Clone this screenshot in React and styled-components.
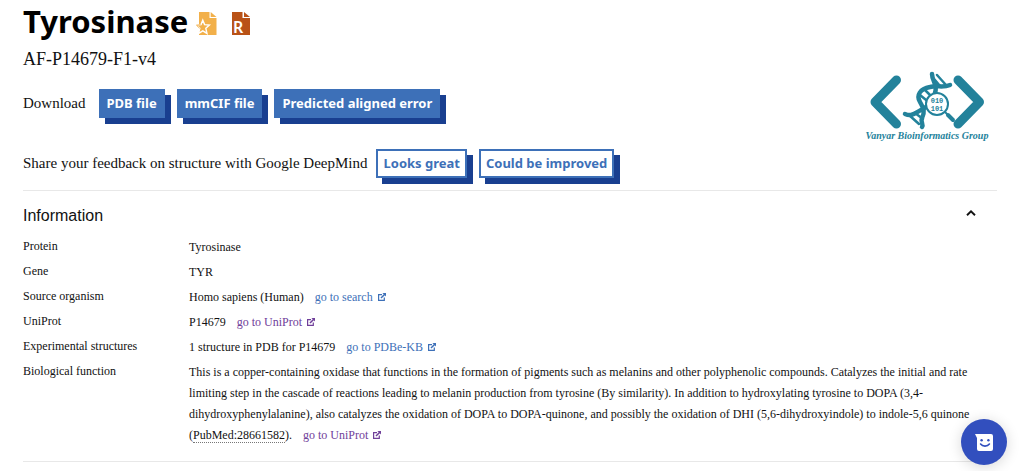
import React, { useState } from "react";
import styled, { createGlobalStyle } from "styled-components";

const App = () => {
  const [open, setOpen] = useState(true);

  return (
    <>
      <GlobalStyle />
      <StyledPage>
        <StyledHeader>
          <StyledSummary>
            <StyledTitle>
              <h1>Tyrosinase</h1>
              <StarFileIcon />
              <ReviewedFileIcon />
            </StyledTitle>
            <StyledEntry>AF-P14679-F1-v4</StyledEntry>
            <StyledActions $gap="13px">
              <span>Download</span>
              <StyledButtons>
                <StyledButton>PDB file</StyledButton>
                <StyledButton>mmCIF file</StyledButton>
                <StyledButton>Predicted aligned error</StyledButton>
              </StyledButtons>
            </StyledActions>
            <StyledActions $gap="9px">
              <span>Share your feedback on structure with Google DeepMind</span>
              <StyledButtons>
                <StyledButton $outline>Looks great</StyledButton>
                <StyledButton $outline>Could be improved</StyledButton>
              </StyledButtons>
            </StyledActions>
          </StyledSummary>
          <GroupLogo />
        </StyledHeader>
        <StyledSection>
          <StyledSectionTitle>
            <h2>Information</h2>
            <StyledToggle
              aria-label="Toggle information"
              aria-expanded={open}
              onClick={() => setOpen(!open)}
            >
              <svg width="10" height="6" viewBox="0 0 10 6">
                <path d="M1 5.2 5 1.3 9 5.2" fill="none" stroke="#111" strokeWidth="1.9" />
              </svg>
            </StyledToggle>
          </StyledSectionTitle>
          {open && (
            <StyledDetails>
              <dt>Protein</dt>
              <dd>Tyrosinase</dd>
              <dt>Gene</dt>
              <dd>TYR</dd>
              <dt>Source organism</dt>
              <dd>
                Homo sapiens (Human)
                <GoTo>go to search</GoTo>
              </dd>
              <dt>UniProt</dt>
              <dd>
                P14679
                <GoTo visited>go to UniProt</GoTo>
              </dd>
              <dt>Experimental structures</dt>
              <dd>
                1 structure in PDB for P14679
                <GoTo>go to PDBe-KB</GoTo>
              </dd>
              <dt>Biological function</dt>
              <dd>
                This is a copper-containing oxidase that functions in the formation of
                pigments such as melanins and other polyphenolic compounds. Catalyzes
                the initial and rate limiting step in the cascade of reactions leading
                to melanin production from tyrosine (By similarity). In addition to
                hydroxylating tyrosine to DOPA (3,4-dihydroxyphenylalanine), also
                catalyzes the oxidation of DOPA to DOPA-quinone, and possibly the
                oxidation of DHI (5,6-dihydroxyindole) to indole-5,6 quinone (
                <StyledReference href="#pubmed">PubMed:28661582</StyledReference>).
                <GoTo visited>go to UniProt</GoTo>
              </dd>
            </StyledDetails>
          )}
        </StyledSection>
      </StyledPage>
      <StyledChat aria-label="Open chat">
        <svg width="18" height="17" viewBox="0 0 18 17">
          <path d="M0 0h16a2 2 0 0 1 2 2v13a2 2 0 0 1-2 2H4a2 2 0 0 1-2-2V4Z" fill="#fff" />
          <circle cx="6.6" cy="6.3" r="1.2" fill="#324fbe" />
          <circle cx="13.4" cy="6.3" r="1.2" fill="#324fbe" />
          <path
            d="M5.6 10c2 2.8 6.8 2.8 8.8 0"
            fill="none"
            stroke="#324fbe"
            strokeWidth="1.6"
            strokeLinecap="round"
          />
        </svg>
      </StyledChat>
    </>
  );
};

const GoTo = ({ children, visited }) => (
  <StyledLink href="#entry" $visited={visited}>
    {children}
    <svg width="8" height="8" viewBox="0 0 8 8" fill="none" stroke="currentColor">
      <path d="M4 1.6H.6V7.4H6.3V4.6" strokeWidth="1.2" />
      <path d="M3 5 6.8 1.2" strokeWidth="1.5" />
      <path d="M4.4 0H8V3.6Z" fill="currentColor" stroke="none" />
    </svg>
  </StyledLink>
);

const StarFileIcon = () => (
  <svg width="21" height="23" viewBox="0 0 21 23" role="img" aria-label="Starred entry">
    <path d="M3 0H13.5V6H20.5V23H3Z" fill="#f2b04a" />
    <path d="M14.7 0 20.5 5H14.7Z" fill="#f2b04a" />
    <path
      d="M6.8 8.2 8.6 12.6 13.4 13 9.8 16.3 11 21.4 6.8 18.8 2.6 21.4 3.8 16.3 .5 13.2 5 12.6Z"
      fill="#f2b04a"
      stroke="#fff"
      strokeWidth="1.4"
    />
    <path d="M4.6 12.8 .5 13.2 3.6 16.2" fill="none" stroke="#f2b04a" />
  </svg>
);

const ReviewedFileIcon = () => (
  <StyledReviewed width="18" height="23" viewBox="0 0 18 23" role="img" aria-label="Reviewed entry">
    <path d="M0 0H10.5V6H18V23H0Z" fill="#b95217" />
    <path d="M12 0 18 5H12Z" fill="#b95217" />
    <text x="1" y="21" fill="#fff">R</text>
  </StyledReviewed>
);

const GroupLogo = () => (
  <StyledLogo width="128" height="78" viewBox="0 0 128 78" role="img" aria-label="Vanyar Bioinformatics Group">
    <g fill="none" stroke="#23829b" strokeLinecap="round" strokeLinejoin="round">
      <path d="M33.5 12 12 34 33.5 56" strokeWidth="9" />
      <path d="M95 12 116.5 34 95 56" strokeWidth="9" />
      <path d="M69 6C69 13 75 17 72 25C69 34 65 39 58 42C52 45 49 49 42 46" strokeWidth="4.5" />
      <path d="M87 17C80 20 74 17 67 19C57 21 53 27 57 34C61 41 62 44 59 50C57 54 61 56 59 59" strokeWidth="4.5" />
      <path d="M74 7 83 17M72 12 77 18M61 21 70 30M57 27 68 36M46 47 56 56M52 45 60 51" strokeWidth="2.5" />
      <circle cx="74" cy="36" r="11" fill="#fff" strokeWidth="2" />
      <path d="M82 44 85 47" strokeWidth="2" />
      <path d="M85 47 90 52" strokeWidth="4" />
    </g>
    <text className="bits" x="74" y="35">010</text>
    <text className="bits" x="74" y="43">101</text>
    <text className="name" x="64" y="71">Vanyar Bioinformatics Group</text>
  </StyledLogo>
);

const GlobalStyle = createGlobalStyle`
  * {
    box-sizing: border-box;
  }
  body {
    margin: 0;
    background: #fff;
    color: #111;
    font-family: "Liberation Serif", serif;
    font-size: 15px;
  }
  h1, h2, dl, dd, p {
    margin: 0;
  }
`;

const StyledPage = styled.main`
  padding: 0 27px 0 23px;
`;

const StyledHeader = styled.header`
  display: flex;
  justify-content: space-between;
  align-items: flex-end;
  padding-bottom: 12px;
  border-bottom: 1px solid #e8e8e8;
`;

const StyledSummary = styled.div`
  display: flex;
  flex-direction: column;
`;

const StyledTitle = styled.div`
  display: flex;
  align-items: center;
  height: 46px;
  h1 {
    margin-right: 8px;
    padding-bottom: 4px;
    font: bold 31px/42px "Noto Sans", sans-serif;
    color: #000;
  }
  svg + svg {
    margin-left: 15px;
  }
`;

const StyledEntry = styled.p`
  margin-bottom: 17px;
  font-size: 18px;
  line-height: 26px;
`;

const StyledActions = styled.div`
  display: flex;
  align-items: center;
  gap: ${({ $gap }) => $gap};
  & + & {
    margin-top: 31px;
  }
`;

const StyledButtons = styled.div`
  display: flex;
  gap: 12px;
`;

const StyledButton = styled.button`
  height: 29px;
  padding: 0 ${({ $outline }) => ($outline ? "5px" : "8px")} 2px;
  border: ${({ $outline }) => ($outline ? "2px solid #3d70b8" : "0")};
  background: ${({ $outline }) => ($outline ? "#fff" : "#3d70b8")};
  color: ${({ $outline }) => ($outline ? "#3d70b8" : "#fff")};
  box-shadow: 6px 6px 0 #193f90;
  font: bold 13px/20px "Noto Sans", sans-serif;
  white-space: nowrap;
  cursor: pointer;
`;

const StyledLogo = styled.svg`
  flex: none;
  margin: 0 6px 32px 0;
  text {
    fill: #23829b;
    text-anchor: middle;
  }
  .bits {
    font: bold 7px "Liberation Mono", monospace;
  }
  .name {
    font: italic bold 10px "Liberation Serif", serif;
  }
`;

const StyledReviewed = styled.svg`
  overflow: visible;
  text {
    font: 600 16px "Noto Sans", sans-serif;
  }
`;

const StyledSection = styled.section`
  padding-bottom: 15px;
  border-bottom: 1px solid #e8e8e8;
`;

const StyledSectionTitle = styled.div`
  display: flex;
  align-items: center;
  justify-content: space-between;
  height: 45px;
  padding: 4px 21px 0 0;
  h2 {
    font: 16px/20px "Liberation Sans", sans-serif;
  }
`;

const StyledToggle = styled.button`
  display: flex;
  padding: 0 0 6px;
  border: 0;
  background: none;
  cursor: pointer;
`;

const StyledDetails = styled.dl`
  display: grid;
  grid-template-columns: 166px 1fr;
  row-gap: 3px;
  padding-right: 8px;
  font-size: 12px;
  line-height: 21px;
  dd {
    padding-top: 1px;
  }
`;

const StyledLink = styled.a`
  margin-left: 11px;
  color: ${({ $visited }) => ($visited ? "#70409a" : "#3d70b8")};
  text-decoration: none;
  white-space: nowrap;
  svg {
    margin-left: 5px;
  }
`;

const StyledReference = styled.a`
  border-bottom: 1px dotted #777;
  color: inherit;
  text-decoration: none;
`;

const StyledChat = styled.button`
  position: fixed;
  right: 17px;
  bottom: 6px;
  display: flex;
  align-items: center;
  justify-content: center;
  width: 46px;
  height: 46px;
  padding: 0;
  border: 0;
  border-radius: 50%;
  background: #324fbe;
  box-shadow: 0 2px 14px rgba(0, 0, 0, 0.16);
  cursor: pointer;
`;

export default App;
